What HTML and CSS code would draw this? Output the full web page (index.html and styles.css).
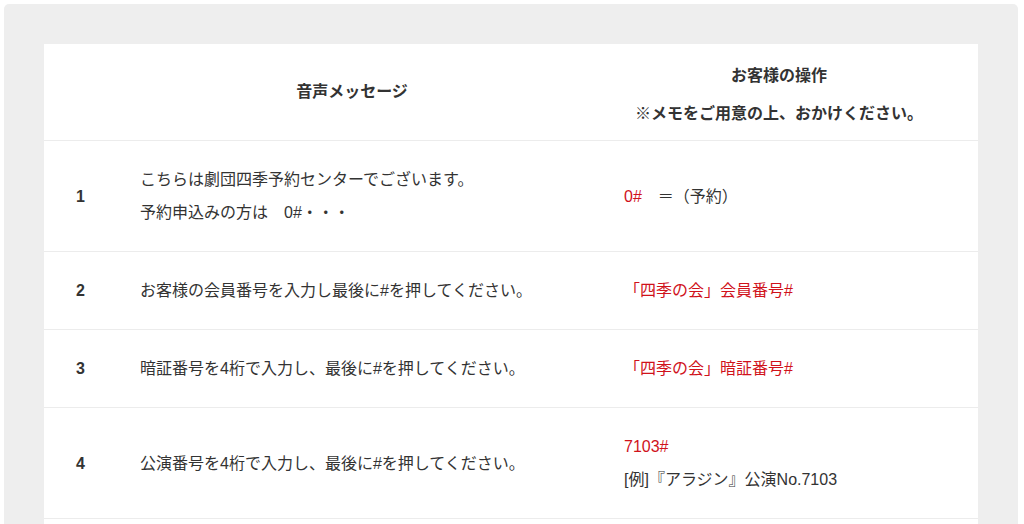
FILE: index.html
```html
<!DOCTYPE html>
<html lang="ja">
<head>
<meta charset="utf-8">
<title>音声メッセージ</title>
<link rel="stylesheet" href="styles.css">
</head>
<body>
<div class="frame">
  <div class="card">
    <table class="guide">
      <colgroup>
        <col class="col-num">
        <col class="col-msg">
        <col class="col-op">
      </colgroup>
      <thead>
        <tr>
          <th class="c-num"></th>
          <th class="c-msg">音声メッセージ</th>
          <th class="c-op"><div class="op-head"><div>お客様の操作</div><div>※メモをご用意の上、おかけください。</div></div></th>
        </tr>
      </thead>
      <tbody>
        <tr>
          <td class="c-num">1</td>
          <td class="c-msg">こちらは劇団四季予約センターでございます。<br>予約申込みの方は　0#・・・</td>
          <td class="c-op"><span class="red">0#</span>　＝（予約）</td>
        </tr>
        <tr>
          <td class="c-num">2</td>
          <td class="c-msg">お客様の会員番号を入力し最後に#を押してください。</td>
          <td class="c-op"><span class="red">「四季の会」会員番号#</span></td>
        </tr>
        <tr>
          <td class="c-num">3</td>
          <td class="c-msg">暗証番号を4桁で入力し、最後に#を押してください。</td>
          <td class="c-op"><span class="red">「四季の会」暗証番号#</span></td>
        </tr>
        <tr>
          <td class="c-num">4</td>
          <td class="c-msg">公演番号を4桁で入力し、最後に#を押してください。</td>
          <td class="c-op"><span class="red">7103#</span><br>[例]『アラジン』公演No.7103</td>
        </tr>
      </tbody>
    </table>
  </div>
</div>
</body>
</html>
```

FILE: styles.css
```css
html, body {
  margin: 0;
  padding: 0;
  background: #ffffff;
}
body {
  padding: 4px 6px 0 4px;
  font-family: "Liberation Sans", "Noto Sans CJK JP", sans-serif;
  color: #333333;
  font-size: 16px;
}
.frame {
  background: #eeeeee;
  border-radius: 5px 5px 0 0;
  padding: 40px 40px 0 40px;
}
.card {
  background: #ffffff;
  padding-bottom: 40px;
}
.guide {
  width: 934px;
  border-collapse: collapse;
  table-layout: fixed;
}
.col-num { width: 66px; }
.col-msg { width: 484px; }
.col-op { width: 384px; }
.guide th {
  height: 96px;
  padding: 0;
  font-weight: bold;
  text-align: center;
  vertical-align: middle;
  border-bottom: 1px solid #ececec;
  line-height: 38px;
}
.guide td {
  padding: 22px 30px;
  line-height: 33px;
  vertical-align: middle;
  border-bottom: 1px solid #ececec;
  text-align: left;
}
.guide td.c-num {
  padding-left: 32px;
  padding-right: 0;
  font-weight: bold;
}
.guide th.c-msg {
  padding: 0 30px;
}
.guide th.c-op {
  padding: 0 44px 0 30px;
}
.op-head {
  padding-top: 6px;
}
.red {
  color: #d0121b;
}
```
